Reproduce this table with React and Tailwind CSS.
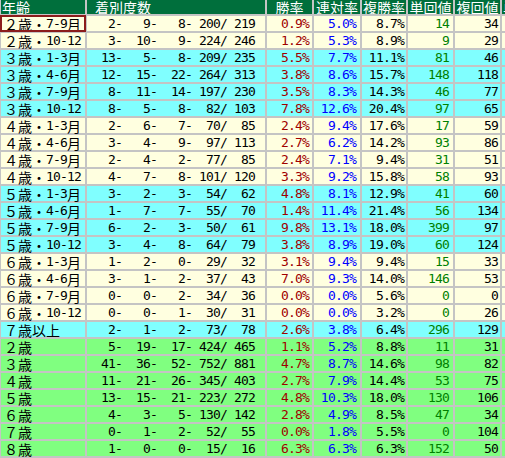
import React from "react";

const rows = [
  ["２歳・7-9月", [2, 9, 8, 200, 219], "0.9%", "5.0%", "8.7%", 14, 34, "y"],
  ["２歳・10-12", [3, 10, 9, 224, 246], "1.2%", "5.3%", "8.9%", 9, 29, "y"],
  ["３歳・1-3月", [13, 5, 8, 209, 235], "5.5%", "7.7%", "11.1%", 81, 46, "c"],
  ["３歳・4-6月", [12, 15, 22, 264, 313], "3.8%", "8.6%", "15.7%", 148, 118, "c"],
  ["３歳・7-9月", [8, 11, 14, 197, 230], "3.5%", "8.3%", "14.3%", 46, 77, "c"],
  ["３歳・10-12", [8, 5, 8, 82, 103], "7.8%", "12.6%", "20.4%", 97, 65, "c"],
  ["４歳・1-3月", [2, 6, 7, 70, 85], "2.4%", "9.4%", "17.6%", 17, 59, "y"],
  ["４歳・4-6月", [3, 4, 9, 97, 113], "2.7%", "6.2%", "14.2%", 93, 86, "y"],
  ["４歳・7-9月", [2, 4, 2, 77, 85], "2.4%", "7.1%", "9.4%", 31, 51, "y"],
  ["４歳・10-12", [4, 7, 8, 101, 120], "3.3%", "9.2%", "15.8%", 58, 93, "y"],
  ["５歳・1-3月", [3, 2, 3, 54, 62], "4.8%", "8.1%", "12.9%", 41, 60, "c"],
  ["５歳・4-6月", [1, 7, 7, 55, 70], "1.4%", "11.4%", "21.4%", 56, 134, "c"],
  ["５歳・7-9月", [6, 2, 3, 50, 61], "9.8%", "13.1%", "18.0%", 399, 97, "c"],
  ["５歳・10-12", [3, 4, 8, 64, 79], "3.8%", "8.9%", "19.0%", 60, 124, "c"],
  ["６歳・1-3月", [1, 2, 0, 29, 32], "3.1%", "9.4%", "9.4%", 15, 33, "y"],
  ["６歳・4-6月", [3, 1, 2, 37, 43], "7.0%", "9.3%", "14.0%", 146, 53, "y"],
  ["６歳・7-9月", [0, 0, 2, 34, 36], "0.0%", "0.0%", "5.6%", 0, 0, "y"],
  ["６歳・10-12", [0, 0, 1, 30, 31], "0.0%", "0.0%", "3.2%", 0, 26, "y"],
  ["７歳以上", [2, 1, 2, 73, 78], "2.6%", "3.8%", "6.4%", 296, 129, "c"],
  ["２歳", [5, 19, 17, 424, 465], "1.1%", "5.2%", "8.8%", 11, 31, "g"],
  ["３歳", [41, 36, 52, 752, 881], "4.7%", "8.7%", "14.6%", 98, 82, "g"],
  ["４歳", [11, 21, 26, 345, 403], "2.7%", "7.9%", "14.4%", 53, 75, "g"],
  ["５歳", [13, 15, 21, 223, 272], "4.8%", "10.3%", "18.0%", 130, 106, "g"],
  ["６歳", [4, 3, 5, 130, 142], "2.8%", "4.9%", "8.5%", 47, 34, "g"],
  ["７歳", [0, 1, 2, 52, 55], "0.0%", "1.8%", "5.5%", 0, 104, "g"],
  ["８歳", [1, 0, 0, 15, 16], "6.3%", "6.3%", "6.3%", 152, 50, "g"],
];

const bgMap = { y: "bg-[#ffffe0]", c: "bg-[#80ffff]", g: "bg-[#80ff80]" };

const jp = "font-['Noto_Sans_CJK_JP',sans-serif] text-[14px] leading-none";
const num = "font-['DejaVu_Sans_Mono',monospace] text-[13px] leading-none tracking-[-0.8px]";

function Label({ text }) {
  return (
    <span className="flex">
      {Array.from(text).map((ch, k) =>
        ch.charCodeAt(0) > 0xff ? (
          <span key={k} className="w-[14px] shrink-0 inline-block text-center">
            {ch}
          </span>
        ) : (
          <span key={k} className={`w-[7px] shrink-0 inline-block text-center ${num}`}>
            {ch}
          </span>
        )
      )}
    </span>
  );
}

function Head({ children, cls = "" }) {
  return (
    <div className={`bg-[#006f3c] text-white h-[14px] overflow-hidden whitespace-nowrap flex items-center ${jp} ${cls}`}>
      {children}
    </div>
  );
}

const cell = "h-[15px] flex items-center whitespace-nowrap";

export default function App() {
  return (
    <div className="w-[505px] h-[458px] overflow-hidden bg-[#c4c4c4]">
      <div className="grid grid-cols-[84px_178px_45px_46px_44px_45px_45px_60px] gap-[2px] pl-[1px] w-[620px]">
        <Head cls="pl-[1px]">年齢</Head>
        <Head cls="pl-[8px]">着別度数</Head>
        <Head cls="justify-center">勝率</Head>
        <Head cls="justify-center">連対率</Head>
        <Head cls="justify-center">複勝率</Head>
        <Head cls="justify-center">単回値</Head>
        <Head cls="justify-center">複回値</Head>
        <Head cls="pl-[1px]">単回</Head>
        {rows.map((r, i) => {
          const bg = bgMap[r[7]];
          const [a, b, c, d, e] = r[1];
          return (
            <React.Fragment key={i}>
              <div
                className={`${bg} ${cell} pl-[3px] text-black ${jp} ${
                  i === 0 ? "outline-2 outline-[#8b1c1c] -outline-offset-1" : ""
                }`}
              >
                <Label text={r[0]} />
              </div>
              <div className={`${bg} ${cell} text-black ${num}`}>
                <span className="w-[35px] text-right">{a}-</span>
                <span className="w-[35px] text-right">{b}-</span>
                <span className="w-[35px] text-right">{c}-</span>
                <span className="w-[35px] text-right">{d}/</span>
                <span className="w-[28px] text-right">{e}</span>
              </div>
              <div className={`${bg} ${cell} justify-end pr-[3px] text-[#a00000] ${num}`}>{r[2]}</div>
              <div className={`${bg} ${cell} justify-end pr-[4px] text-[#0000ff] ${num}`}>{r[3]}</div>
              <div className={`${bg} ${cell} justify-end pr-[2px] text-black ${num}`}>{r[4]}</div>
              <div className={`${bg} ${cell} justify-end pr-[4px] text-[#008000] ${num}`}>{r[5]}</div>
              <div className={`${bg} ${cell} justify-end pr-[2px] text-black ${num}`}>{r[6]}</div>
              <div className={`${bg} ${cell}`}></div>
            </React.Fragment>
          );
        })}
      </div>
    </div>
  );
}
